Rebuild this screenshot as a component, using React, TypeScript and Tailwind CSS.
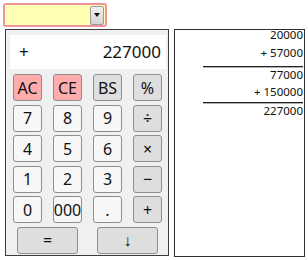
import React from "react";

const btnBase =
  "flex items-center justify-center h-[27px] rounded-[3px] border border-[#8e8e8e] text-[16px] leading-none text-[#111]";

function Btn({ label, kind }: { label: string; kind: "num" | "op" | "red" }) {
  const bg =
    kind === "red" ? "bg-[#ffacac]" : kind === "op" ? "bg-[#dedede]" : "bg-[#f7f7f7]";
  return <div className={`${btnBase} ${bg}`}>{label}</div>;
}

export default function App() {
  const rows: { label: string; kind: "num" | "op" | "red" }[] = [
    { label: "AC", kind: "red" },
    { label: "CE", kind: "red" },
    { label: "BS", kind: "op" },
    { label: "%", kind: "op" },
    { label: "7", kind: "num" },
    { label: "8", kind: "num" },
    { label: "9", kind: "num" },
    { label: "÷", kind: "op" },
    { label: "4", kind: "num" },
    { label: "5", kind: "num" },
    { label: "6", kind: "num" },
    { label: "×", kind: "op" },
    { label: "1", kind: "num" },
    { label: "2", kind: "num" },
    { label: "3", kind: "num" },
    { label: "−", kind: "op" },
    { label: "0", kind: "num" },
    { label: "000", kind: "num" },
    { label: ".", kind: "num" },
    { label: "+", kind: "op" },
  ];
  return (
    <div
      className="w-[308px] h-[260px] bg-white pl-[3px] pt-[3px] flex flex-col"
      style={{ fontFamily: '"Noto Sans", "Open Sans", sans-serif' }}
    >
      {/* combo box */}
      <div className="w-[104px] h-[24px] rounded-[3px] border-2 border-[#f0939d] bg-[#ffffb4] flex items-center justify-end pr-[1px]">
        <div className="w-[14px] h-[19px] rounded-[2px] border border-[#9a9a9a] bg-gradient-to-b from-[#f2f2f2] to-[#d4d4d4] flex items-center justify-center">
          <svg width="6" height="4" viewBox="0 0 6 4">
            <path d="M0 0 H6 L3 4 Z" fill="#111" />
          </svg>
        </div>
      </div>

      <div className="flex ml-[2px] mt-[2px]">
        {/* calculator */}
        <div className="w-[164px] h-[227px] border border-[#3c3c3c] bg-[#f0f0f0] flex flex-col">
          <div className="ml-[4px] mt-[5px] w-[156px] h-[34px] bg-white flex items-center justify-between pl-[9px] pr-[5px] text-[17px] text-[#111]">
            <span>+</span>
            <span>227000</span>
          </div>
          <div className="ml-[7px] mt-[5px] w-[149px] grid grid-cols-4 gap-x-[11px] gap-y-[3.6px]">
            {rows.map((r, i) => (
              <Btn key={i} label={r.label} kind={r.kind} />
            ))}
            <div className="col-span-2 flex justify-center">
              <div className={`${btnBase} bg-[#dedede] w-[61px]`}>=</div>
            </div>
            <div className="col-span-2 flex justify-center">
              <div className={`${btnBase} bg-[#dedede] w-[61px]`}>↓</div>
            </div>
          </div>
        </div>

        {/* tape */}
        <div
          className="ml-[5px] w-[131px] h-[228px] border border-[#2e2e2e] bg-white flex flex-col items-end pr-[1px] text-[11.5px] leading-[12px] text-[#111]"
          style={{ fontFamily: '"Noto Sans", Tahoma, sans-serif' }}
        >
          <div className="-mt-px">20000</div>
          <div className="mt-[6px]">+ 57000</div>
          <div className="mt-[7px] w-[100px] h-[2px] border-t border-[#222] bg-[#b0b0b0]" />
          <div className="mt-[1px]">77000</div>
          <div className="mt-[5px]">+ 150000</div>
          <div className="mt-[4px] w-[100px] h-[2px] border-t border-[#222] bg-[#b0b0b0]" />
          <div className="mt-[1px]">227000</div>
        </div>
      </div>
    </div>
  );
}
